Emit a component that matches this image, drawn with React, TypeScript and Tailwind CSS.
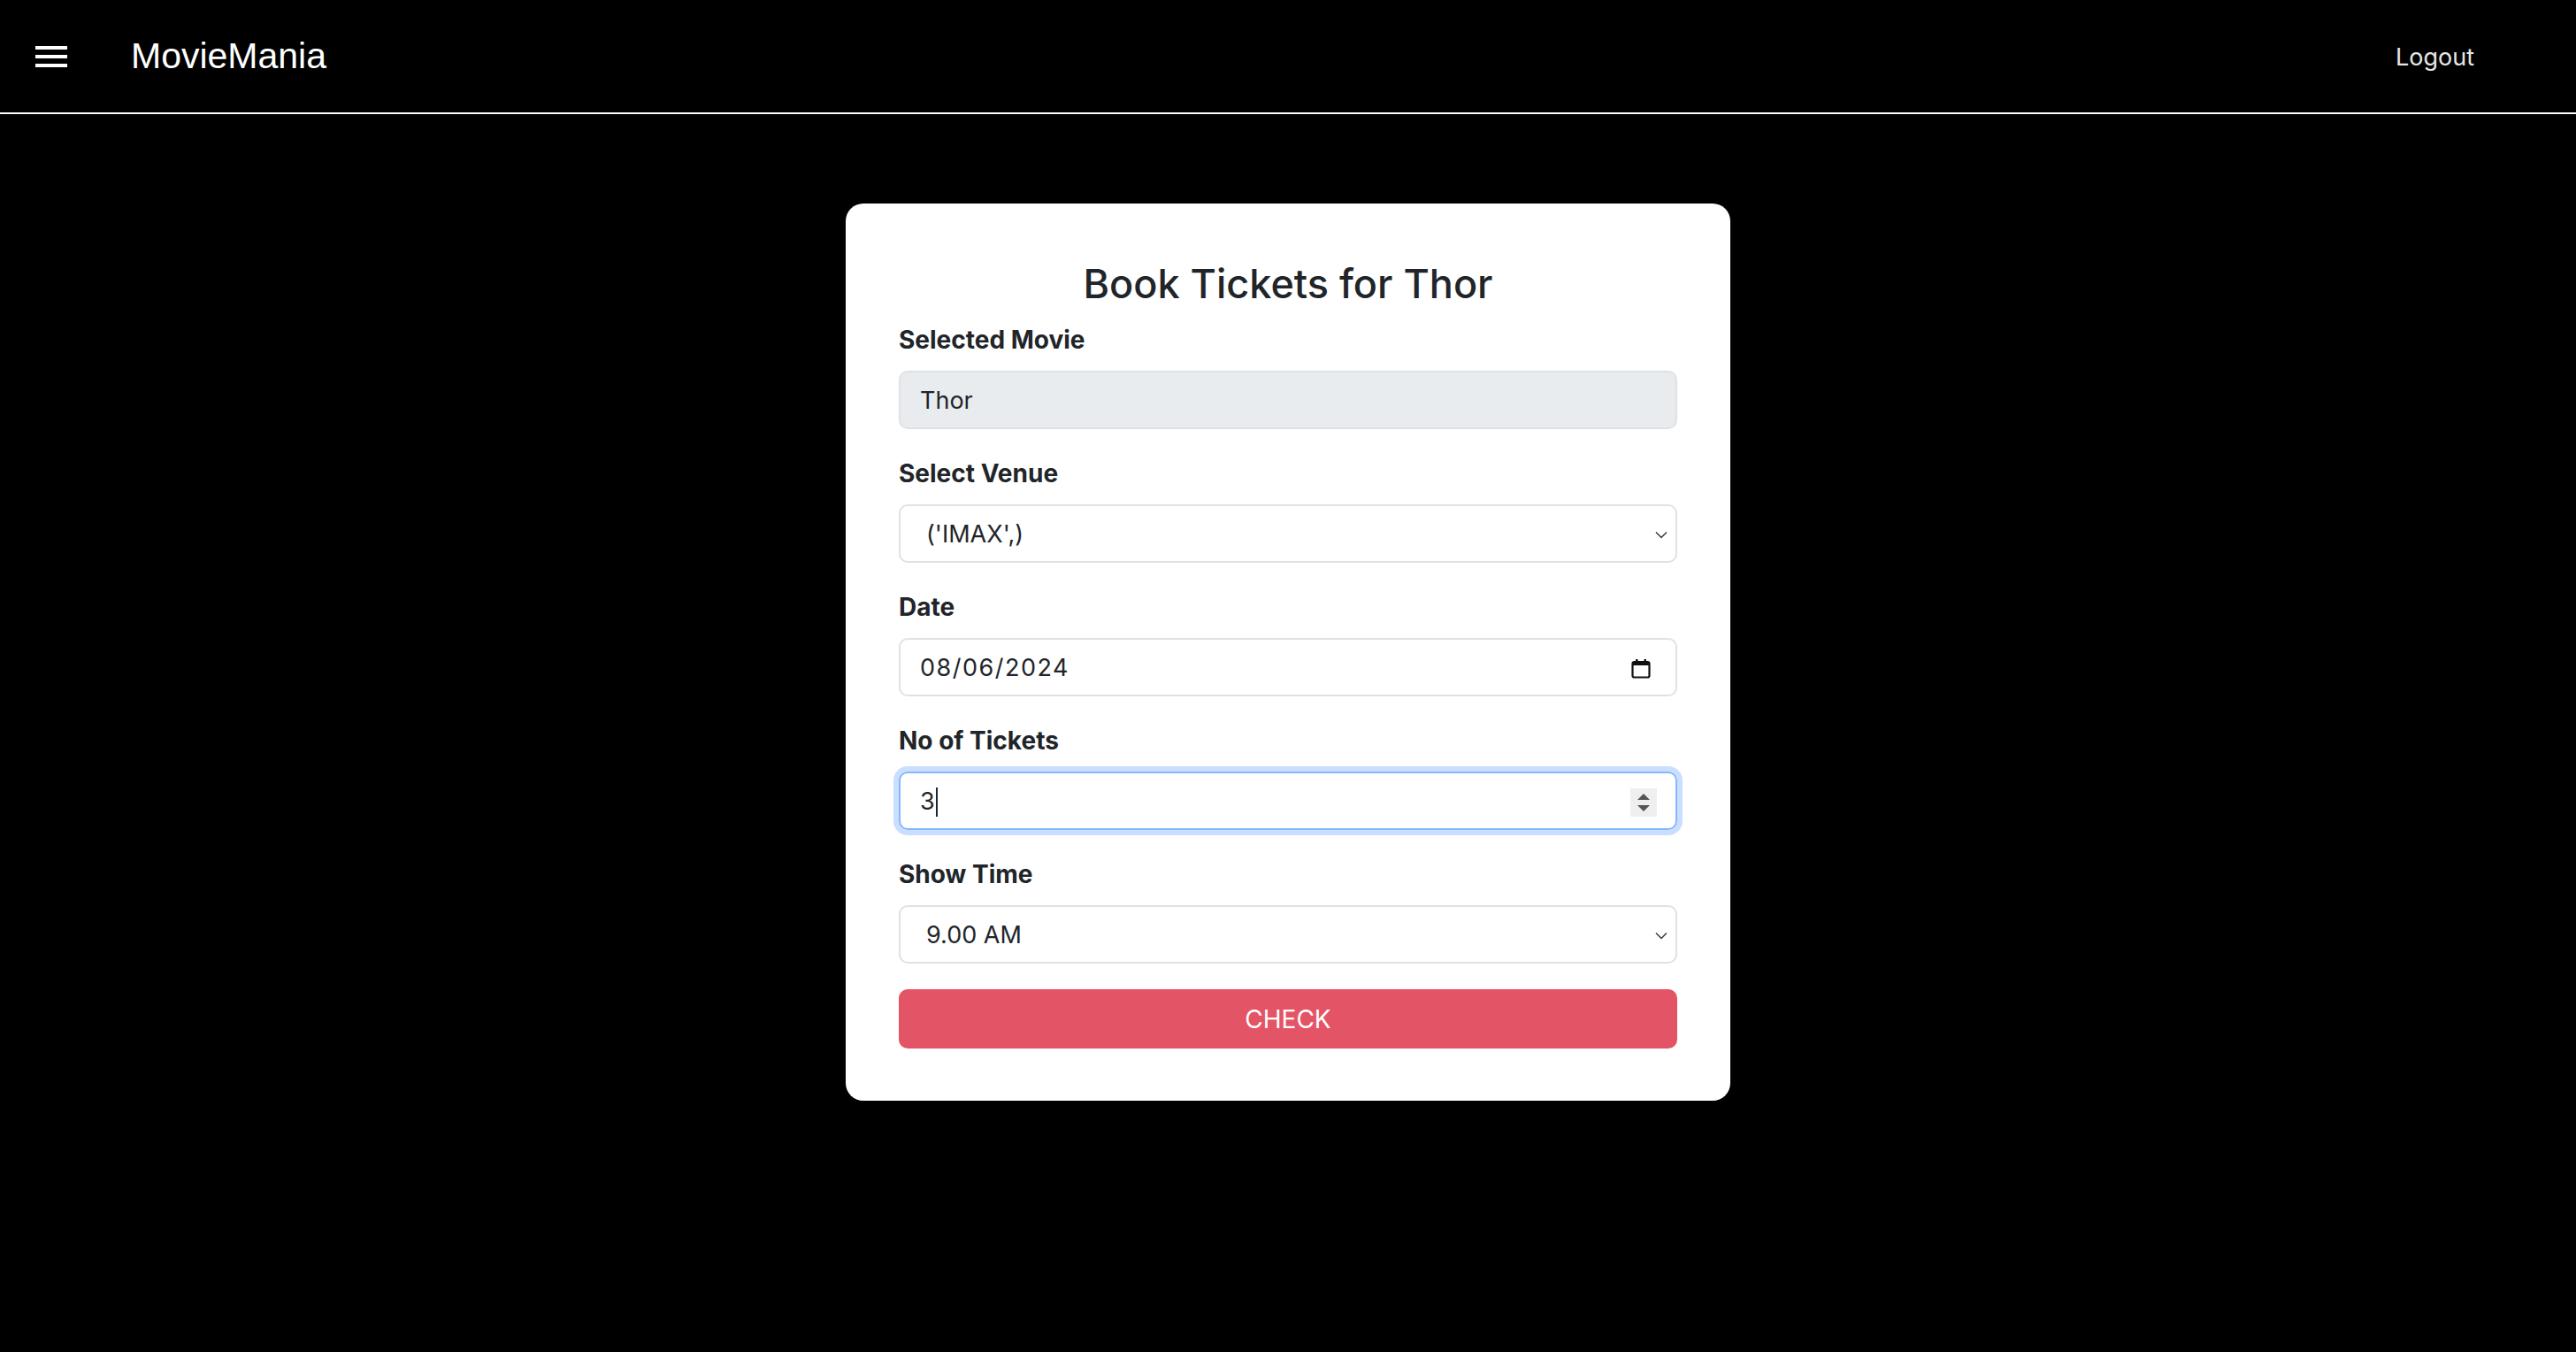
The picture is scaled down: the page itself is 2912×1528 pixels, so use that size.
import type { ReactNode } from 'react'

const sans = "font-['Inter','Noto_Sans',sans-serif]"

function Chevron() {
  return (
    <svg width="14" height="9" viewBox="0 0 14 9" fill="none">
      <path d="M1 1.5 7 7.5 13 1.5" stroke="#343a40" strokeWidth="1.5" />
    </svg>
  )
}

function CalendarIcon() {
  return (
    <svg width="22" height="22" viewBox="0 0 22 22" fill="none">
      <rect x="5" y="0" width="2.5" height="4" fill="#111" />
      <rect x="14.5" y="0" width="2.5" height="4" fill="#111" />
      <rect x="1.5" y="3" width="19" height="17.5" rx="2" stroke="#111" strokeWidth="2.2" />
      <rect x="1.5" y="3" width="19" height="4" fill="#111" />
    </svg>
  )
}

function Spinner() {
  return (
    <div className="flex h-[32px] w-[30px] flex-col items-center justify-center gap-[6px] bg-[#efefef]">
      <svg width="14" height="7" viewBox="0 0 14 7">
        <path d="M7 0 14 7H0Z" fill="#555" />
      </svg>
      <svg width="14" height="7" viewBox="0 0 14 7">
        <path d="M0 0h14L7 7Z" fill="#555" />
      </svg>
    </div>
  )
}

function Field({ label, children }: { label: string; children: ReactNode }) {
  return (
    <div>
      <div className="h-[42px] text-[28px] leading-[42px] font-bold text-[#212529]">
        {label}
      </div>
      <div className="mt-[14px]">{children}</div>
    </div>
  )
}

const box =
  'flex h-[66px] items-center rounded-[10px] border-2 pt-[3px] text-[27px] text-[#212529]'

export default function App() {
  return (
    <div className={`min-h-screen bg-black ${sans}`}>
      <header className="flex h-[129px] items-center border-b-2 border-white pr-[115px] pl-[40px]">
        <div className="flex w-[36px] flex-col gap-[6px]">
          <span className="h-[4px] bg-white" />
          <span className="h-[4px] bg-white" />
          <span className="h-[4px] bg-white" />
        </div>
        <span className="ml-[72px] font-['Liberation_Sans','Arial',sans-serif] text-[41px] text-white">
          MovieMania
        </span>
        <span className="ml-auto pt-[3px] text-[27px] text-[#e6e6e6]">Logout</span>
      </header>

      <main className="flex justify-center pt-[101px]">
        <div className="w-[1000px] rounded-[20px] bg-white px-[60px] pt-[62px] pb-[59px]">
          <h1 className="h-[58px] text-center text-[45px] leading-[58px] font-medium text-[#212529]">
            Book Tickets for Thor
          </h1>

          <div className="mt-[13px] flex flex-col gap-[29px]">
            <Field label="Selected Movie">
              <div className={`${box} border-[#dee2e6] bg-[#e9ecef] px-[22px] text-[#343a40]`}>
                Thor
              </div>
            </Field>

            <Field label="Select Venue">
              <div className={`${box} justify-between border-[#dee2e6] pr-[9px] pl-[29px]`}>
                <span>('IMAX',)</span>
                <Chevron />
              </div>
            </Field>

            <Field label="Date">
              <div className={`${box} justify-between border-[#dee2e6] pr-[28px] pl-[22px]`}>
                <span className="tracking-[1.5px]">08/06/2024</span>
                <CalendarIcon />
              </div>
            </Field>

            <Field label="No of Tickets">
              <div
                className={`${box} justify-between border-[#86b7fe] pr-[21px] pl-[22px] shadow-[0_0_0_6px_rgba(13,110,253,0.22)]`}
              >
                <span className="flex items-center">
                  3<span className="ml-[1px] h-[33px] w-[2px] bg-[#212529]" />
                </span>
                <Spinner />
              </div>
            </Field>

            <Field label="Show Time">
              <div className={`${box} justify-between border-[#dee2e6] pr-[9px] pl-[29px]`}>
                <span>9.00 AM</span>
                <Chevron />
              </div>
            </Field>
          </div>

          <button className="mt-[29px] flex h-[67px] w-full items-center justify-center rounded-[10px] bg-[#e35467] text-[28px] text-white">
            CHECK
          </button>
        </div>
      </main>
    </div>
  )
}
